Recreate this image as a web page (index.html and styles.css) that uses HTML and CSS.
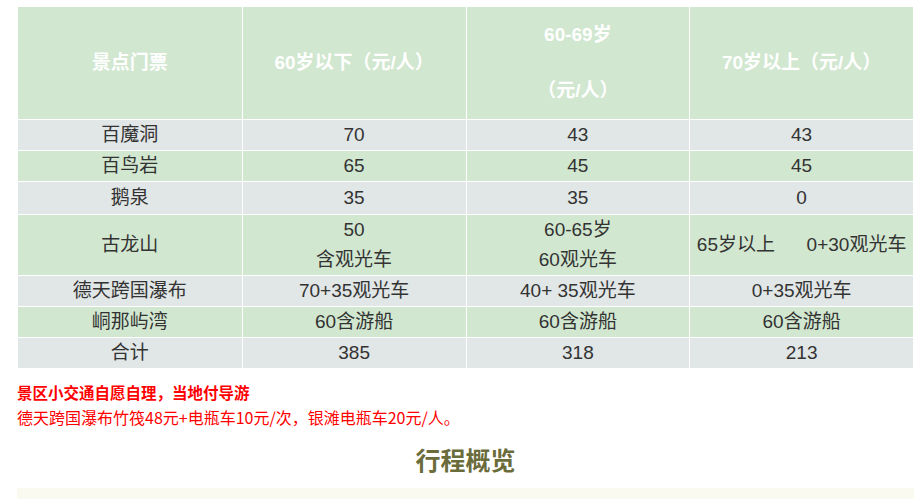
FILE: index.html
```html
<!DOCTYPE html>
<html lang="zh">
<head>
<meta charset="utf-8">
<link rel="stylesheet" href="styles.css">
</head>
<body>
<div class="page">
  <table class="price">
    <thead>
      <tr>
        <th>景点门票</th>
        <th>60岁以下（元/人）</th>
        <th><p>60-69岁</p><p class="second">（元/人）</p></th>
        <th>70岁以上（元/人）</th>
      </tr>
    </thead>
    <tbody>
      <tr class="gray"><td>百魔洞</td><td>70</td><td>43</td><td>43</td></tr>
      <tr class="green"><td>百鸟岩</td><td>65</td><td>45</td><td>45</td></tr>
      <tr class="gray tall"><td>鹅泉</td><td>35</td><td>35</td><td>0</td></tr>
      <tr class="green"><td>古龙山</td><td>50<br>含观光车</td><td>60-65岁<br>60观光车</td><td>65岁以上&nbsp;&nbsp;&nbsp;&nbsp;&nbsp;&nbsp;0+30观光车</td></tr>
      <tr class="gray"><td>德天跨国瀑布</td><td>70+35观光车</td><td>40+ 35观光车</td><td>0+35观光车</td></tr>
      <tr class="green"><td>峒那屿湾</td><td>60含游船</td><td>60含游船</td><td>60含游船</td></tr>
      <tr class="gray"><td>合计</td><td>385</td><td>318</td><td>213</td></tr>
    </tbody>
  </table>
  <div class="notes">
    <p class="strong">景区小交通自愿自理，当地付导游</p>
    <p>德天跨国瀑布竹筏48元+电瓶车10元/次，银滩电瓶车20元/人。</p>
  </div>
  <h2 class="title">行程概览</h2>
  <div class="overview"></div>
</div>
</body>
</html>
```

FILE: styles.css
```css
html, body {
  margin: 0;
  padding: 0;
  background: #ffffff;
}

.page {
  padding: 7px 7px 0 17px;
  font-family: "Liberation Sans", "Noto Sans CJK SC", sans-serif;
}

.price {
  width: 895px;
  margin-left: 1px;
  border-spacing: 0;
  table-layout: fixed;
  font-size: 19px;
  color: #333333;
}

.price th,
.price td {
  padding: 0;
  text-align: center;
  vertical-align: middle;
  border-left: 1px solid #ffffff;
}

.price th:first-child,
.price td:first-child {
  border-left: none;
}

.price th {
  height: 112px;
  background: #d1e7d0;
  color: #ffffff;
  font-weight: bold;
  line-height: 28px;
}

.price th p {
  margin: 0;
}

.price th p.second {
  margin-top: 28px;
}

.price td {
  line-height: 30px;
  border-top: 1px solid #ffffff;
  white-space: nowrap;
}

.price tr.tall td {
  line-height: 32px;
}

.price tr.gray td {
  background: #e1e6e6;
}

.price tr.green td {
  background: #d2e7d0;
}

.notes {
  margin-top: 12px;
  color: #ff0000;
  font-family: "Noto Sans CJK SC", "Liberation Sans", sans-serif;
}

.notes p {
  margin: 0;
  line-height: 25px;
  font-size: 16px;
}

.notes p.strong {
  font-weight: bold;
  font-size: 15.5px;
}

.title {
  margin: 13px 0 0 0;
  line-height: 36px;
  font-size: 25px;
  font-weight: bold;
  text-align: center;
  color: #6b6c3b;
  padding-left: 1px;
}

.overview {
  margin-top: 9px;
  height: 11px;
  width: 897px;
  background: #fafaf0;
}
```
